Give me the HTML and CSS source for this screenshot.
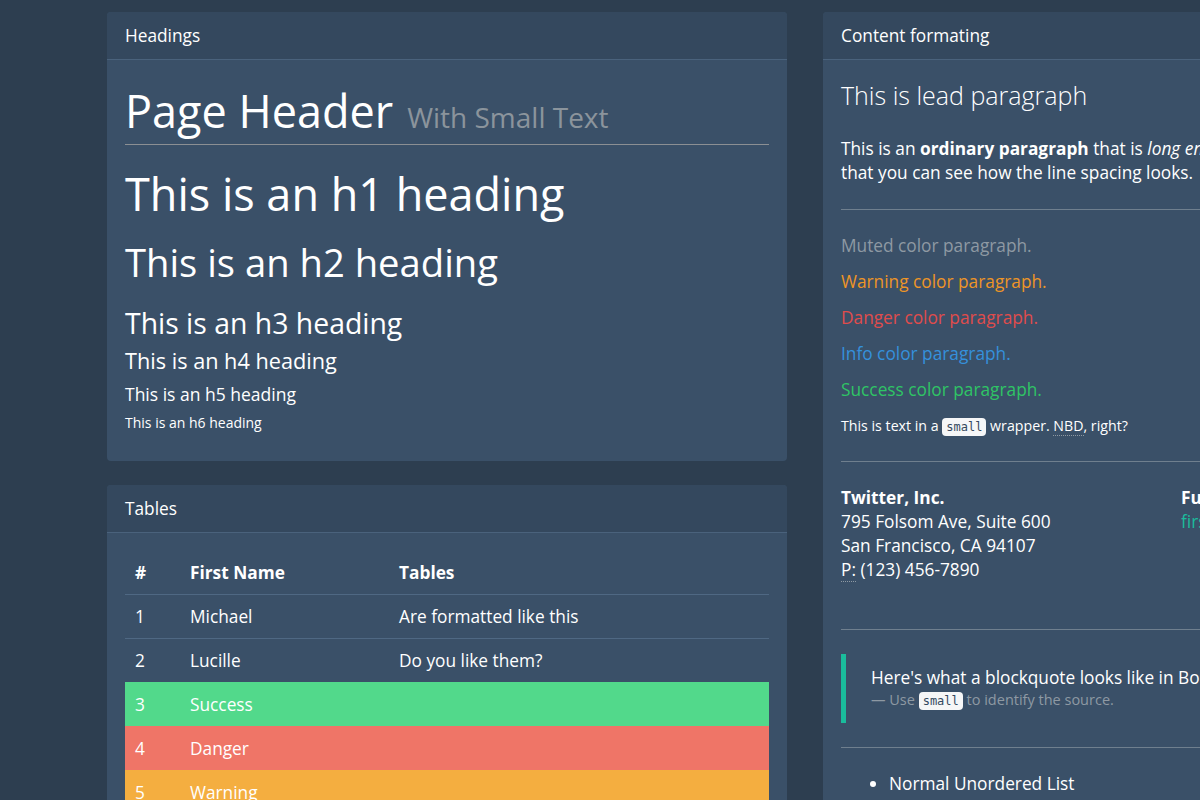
FILE: index.html
```html
<!DOCTYPE html>
<html>
<head>
<meta charset="utf-8">
<link rel="stylesheet" href="styles.css">
</head>
<body>
<div class="page">
  <div class="col">
    <section class="card">
      <div class="card-header">Headings</div>
      <div class="card-body">
        <div class="page-header"><span class="ph-main">Page Header</span><small class="ph-small">With Small Text</small></div>
        <h1>This is an h1 heading</h1>
        <h2>This is an h2 heading</h2>
        <h3>This is an h3 heading</h3>
        <h4>This is an h4 heading</h4>
        <h5>This is an h5 heading</h5>
        <h6>This is an h6 heading</h6>
      </div>
    </section>
    <section class="card">
      <div class="card-header">Tables</div>
      <div class="card-body">
        <table class="table">
          <thead>
            <tr><th class="c1">#</th><th class="c2">First Name</th><th>Tables</th></tr>
          </thead>
          <tbody>
            <tr><td>1</td><td>Michael</td><td>Are formatted like this</td></tr>
            <tr><td>2</td><td>Lucille</td><td>Do you like them?</td></tr>
            <tr class="row-success"><td>3</td><td>Success</td><td></td></tr>
            <tr class="row-danger"><td>4</td><td>Danger</td><td></td></tr>
            <tr class="row-warning"><td>5</td><td>Warning</td><td></td></tr>
          </tbody>
        </table>
      </div>
    </section>
  </div>
  <div class="col">
    <section class="card">
      <div class="card-header">Content formating</div>
      <div class="card-body">
        <p class="lead">This is lead paragraph</p>
        <p class="text">This is an <strong>ordinary paragraph</strong> that is <em>long enough to wrap to multiple lines</em> so that you can see how the line spacing looks.</p>
        <hr>
        <p class="cp muted">Muted color paragraph.</p>
        <p class="cp warning">Warning color paragraph.</p>
        <p class="cp danger">Danger color paragraph.</p>
        <p class="cp info">Info color paragraph.</p>
        <p class="cp success">Success color paragraph.</p>
        <p class="small-line">This is text in a <code>small</code> wrapper. <abbr>NBD</abbr>, right?</p>
        <hr>
        <div class="address-row">
          <address><strong>Twitter, Inc.</strong><br>795 Folsom Ave, Suite 600<br>San Francisco, CA 94107<br><abbr>P:</abbr> (123) 456-7890</address>
          <address><strong>Full Name</strong><br><span class="link">first.last@example.com</span></address>
        </div>
        <hr>
        <blockquote>
          <p>Here's what a blockquote looks like in Bootstrap.</p>
          <small>— Use <code>small</code> to identify the source.</small>
        </blockquote>
        <hr>
        <ul class="list">
          <li>Normal Unordered List</li>
          <li>Can Also Work</li>
        </ul>
      </div>
    </section>
  </div>
</div>
</body>
</html>
```

FILE: styles.css
```css
html, body {
  margin: 0;
  padding: 0;
  overflow: hidden;
  height: 800px;
}
body {
  background: #2d3e50;
  color: #ffffff;
  font-family: "Open Sans", "Liberation Sans", sans-serif;
  font-size: 17.3px;
}
.page {
  display: flex;
  gap: 36px;
  padding: 12px 0 0 107px;
  width: 1500px;
  align-items: flex-start;
}
.col {
  width: 680px;
  flex: none;
  display: flex;
  flex-direction: column;
  gap: 24px;
}
.card {
  background: #3a5068;
  border-radius: 4px;
  overflow: hidden;
}
.card-header {
  background: #34485e;
  border-bottom: 1px solid #4a627c;
  height: 48px;
  box-sizing: border-box;
  padding: 0 18px;
  display: flex;
  align-items: center;
  font-size: 17.3px;
}
.card-body {
  padding: 18px;
}
.page-header {
  border-bottom: 1px solid #8b8f93;
  padding-bottom: 8px;
  margin: 8px 0 20px;
  line-height: 1.1;
}
.ph-main {
  font-size: 45px;
}
.ph-small {
  font-size: 28px;
  color: #8b949c;
  margin-left: 14px;
}
h1, h2, h3, h4, h5, h6 {
  font-weight: 400;
  margin: 0;
  line-height: 1.3;
}
h1 { font-size: 45px; margin-bottom: 15px; }
h2 { font-size: 38.2px; margin-bottom: 17px; }
h3 { font-size: 28.4px; margin-bottom: 5px; }
h4 { font-size: 21.7px; margin-bottom: 8px; }
h5 { font-size: 17.5px; margin-bottom: 8px; }
h6 { font-size: 14px; margin-bottom: 11px; }

.table {
  width: 100%;
  border-collapse: collapse;
  font-size: 17.3px;
}
.table th {
  text-align: left;
  font-weight: 700;
  padding: 0 10px;
  height: 43px;
  border-bottom: 1px solid #4f6883;
}
.table td {
  padding: 0 10px;
  height: 43px;
  border-top: 1px solid #4f6883;
}
.c1 { width: 35px; }
.c2 { width: 189px; }
.row-success td { background: #52d98b; border-color: #52d98b; }
.row-danger td { background: #ef7567; border-color: #ef7567; }
.row-warning td { background: #f4ae40; border-color: #f4ae40; }

p { margin: 0; }
.lead {
  font-size: 25px;
  font-weight: 300;
  margin-top: 0;
  margin-bottom: 25px;
}
.text {
  line-height: 24px;
}
hr {
  border: 0;
  border-top: 1px solid #6f7f8e;
  margin: 24px 0;
}
.cp {
  line-height: 24px;
  margin-bottom: 12px;
}
.muted { color: #8e99a3; }
.warning { color: #ee9526; }
.danger { color: #e04c4c; }
.info { color: #3590dc; }
.success { color: #2fc465; }
.small-line {
  font-size: 14.2px;
  line-height: 20px;
  margin-top: 14px;
}
code {
  font-family: "DejaVu Sans Mono", "Liberation Mono", monospace;
  font-size: 12px;
  background: #f5f6f7;
  color: #34495e;
  padding: 2px 4px;
  border-radius: 4px;
}
abbr {
  text-decoration: none;
  border-bottom: 1px dotted #8e99a3;
}
.address-row {
  display: grid;
  grid-template-columns: 340px 1fr;
  margin-bottom: 47px;
}
address {
  font-style: normal;
  line-height: 24px;
}
.link { color: #1abc9c; }
blockquote {
  margin: 0;
  border-left: 5px solid #1abc9c;
  padding: 12px 25px;
}
blockquote p {
  font-size: 17.3px;
  line-height: 24px;
}
blockquote small {
  display: block;
  font-size: 14.5px;
  color: #8e99a3;
  line-height: 20px;
}
.list {
  margin: 0;
  padding-left: 48px;
  line-height: 24px;
}
```
